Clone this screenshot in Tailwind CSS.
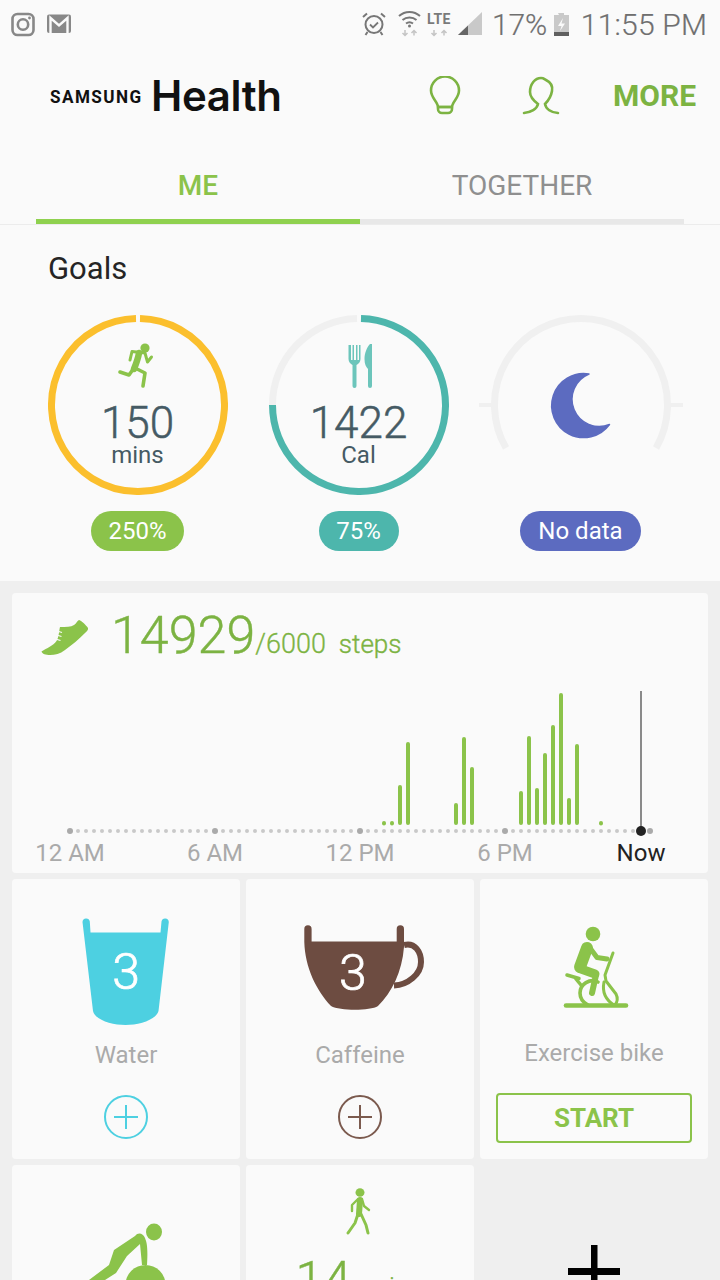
<!DOCTYPE html>
<html lang="en">
<head>
<meta charset="UTF-8">
<meta name="viewport" content="width=device-width, initial-scale=1.0">
<title>Samsung Health</title>
<script src="https://cdn.jsdelivr.net/npm/@tailwindcss/browser@4"></script>
</head>
<body class="bg-[#efefef] font-[Roboto,sans-serif]">
<div class="w-[720px] h-[1280px] overflow-hidden flex flex-col">

  <!-- top area -->
  <div class="bg-[#fafafa] h-[581px] shrink-0">
    <!-- status bar -->
    <div class="h-[48px] flex items-center text-[30px] text-[#7a7a7a] relative">
      <svg class="ml-[10px]" width="64" height="28" viewBox="10 10 64 28" fill="none">
        <rect x="12.5" y="14" width="21" height="21" rx="5" stroke="#888" stroke-width="2.6"/>
        <circle cx="23" cy="24.5" r="5.2" stroke="#888" stroke-width="2.6"/>
        <circle cx="29.5" cy="18" r="1.4" fill="#888"/>
        <path d="M49 14.5H69a2 2 0 0 1 2 2V31a2 2 0 0 1-2 2H49a2 2 0 0 1-2-2V16.500a2 2 0 0 1 2-2Z" fill="#888"/>
        <path d="M50.500 33V18L59 25.500 67.500 18V33" stroke="#fafafa" stroke-width="2.4"/>
      </svg>
      <svg class="ml-[286px]" width="124" height="28" viewBox="360 10 124 28" fill="none">
        <circle cx="374" cy="24.500" r="8.500" stroke="#777" stroke-width="2"/>
        <path d="M370 24.500l3 3 5-5" stroke="#777" stroke-width="1.800"/>
        <path d="M363 17l4-3.500M385 17l-4-3.500M367.500 32l-2 3M380.500 32l2 3" stroke="#777" stroke-width="2"/>
        <path d="M399 16c6-5.500 15-5.500 21 0" stroke="#777" stroke-width="2"/>
        <path d="M402.500 20c4-3.500 10-3.500 14 0" stroke="#777" stroke-width="2"/>
        <path d="M406 23.500c2-1.500 5-1.500 7 0" stroke="#777" stroke-width="2"/>
        <circle cx="409.500" cy="26" r="1.500" fill="#777"/>
        <path d="M405 30v5M402.500 33l2.500 2.500 2.500-2.500M414 35.500v-5M411.500 33l2.500-2.500 2.500 2.500" stroke="#c4c4c4" stroke-width="1.500"/>
        <path d="M434 30v5M431.500 33l2.500 2.500 2.500-2.500M444 35.500v-5M441.500 33l2.500-2.500 2.500 2.500" stroke="#c4c4c4" stroke-width="1.500"/>
        <path d="M458 35 482 12V35Z" fill="#c9c9c9"/>
        <path d="M458 35l10-9.500V35Z" fill="#666"/>
      </svg>
      <span class="absolute left-[427px] top-[11px] text-[14px] leading-[16px] font-bold tracking-[0.4px]">LTE</span>
      <span class="ml-[8px] font-light tracking-[-0.2px] text-[#6f6f6f] [-webkit-text-stroke:0.2px_#6f6f6f]">17%</span>
      <svg class="ml-[6px]" width="18" height="26" viewBox="553 11 18 26">
        <path d="M558 13h6v2h5v21h-15v-21h5Z" fill="#c9c9c9"/>
        <path d="M554 32h15v4h-15Z" fill="#5f5f5f"/>
        <path d="M563 18l-5 8h3.500l-1.500 5 5-7.500h-3.500Z" fill="#fafafa"/>
      </svg>
      <span class="ml-[10px] font-light whitespace-nowrap text-[#6f6f6f] tracking-[0.2px] [-webkit-text-stroke:0.2px_#6f6f6f]">11:55 PM</span>
    </div>

    <!-- header -->
    <div class="h-[96px] flex items-center">
      <span class="ml-[50px] w-[97px] text-[19px] font-bold text-[#111] tracking-[1.6px] scale-x-90 origin-left leading-none mt-[1px]">SAMSUNG</span>
      <span class="ml-[4px] w-[132px] text-[42px] font-[Inter,sans-serif] font-semibold text-[#111] tracking-[-0.4px] leading-none whitespace-nowrap">Health</span>
      <svg class="ml-[146px]" width="32" height="40" viewBox="429 76 32 40" fill="none" stroke="#7cb342" stroke-width="2.600" stroke-linejoin="round">
        <path d="M438 107c0-5-7-9-7-16.500a14 14 0 0 1 28 0c0 7.500-7 11.500-7 16.500Z"/>
        <path d="M438 107h14v2a4 4 0 0 1-4 4h-6a4 4 0 0 1-4-4Z"/>
      </svg>
      <svg class="ml-[61px]" width="38" height="40" viewBox="522 76 38 40" fill="none" stroke="#7cb342" stroke-width="2.600" stroke-linecap="round">
        <path d="M524 113c7-.5 13-4 14-9-4-3-8-7-8-12 0-8 5-14 11-14 3 0 3 1 5 2 4 2 7 6 6 11-1 6-3 9-7 13 1 5 6 8.500 13 9"/>
      </svg>
      <span class="ml-[53px] text-[30px] font-bold text-[#7cb342] leading-none">MORE</span>
    </div>

    <!-- tabs -->
    <div class="h-[81px] border-b border-[#ececec]">
      <div class="mx-[36px] grid grid-cols-2 h-[80px]">
        <div class="border-b-[5px] border-[#8fd14f] flex items-center justify-center pt-[9px] text-[28px] font-medium text-[#8bc34a]">ME</div>
        <div class="border-b-[5px] border-[#e8e8e8] flex items-center justify-center pt-[9px] text-[28px] text-[#8f8f8f]">TOGETHER</div>
      </div>
    </div>

    <!-- goals -->
    <h2 class="ml-[48px] mt-[26px] text-[31px] leading-[36px] text-[#252525]">Goals</h2>
    <div class="flex pl-[27px] mt-[28px]">

      <div class="w-[221px] flex flex-col items-center">
        <div class="relative w-[180px] h-[180px]">
          <svg class="absolute inset-0" width="180" height="180" viewBox="0 0 180 180" fill="none">
            <path d="M92 3.530A86.500 86.500 0 1 1 88 3.530" stroke="#fbbf2d" stroke-width="7"/>
            <circle cx="97" cy="33" r="4.600" fill="#8bc34a"/>
            <path d="M82 45l2-8.500 13 1.500 2.500 9 4-5" stroke="#8bc34a" stroke-width="3" stroke-linecap="round" stroke-linejoin="round"/>
            <path d="M91 38c-1 6-3 11-5 16" stroke="#8bc34a" stroke-width="6.500" stroke-linecap="round"/>
            <path d="M86 53 81 60 72 57" stroke="#8bc34a" stroke-width="3.600" stroke-linecap="round" stroke-linejoin="round"/>
            <path d="M87 53 97 58 95 71" stroke="#8bc34a" stroke-width="3.600" stroke-linecap="round" stroke-linejoin="round"/>
          </svg>
          <div class="absolute inset-x-0 top-[88px] text-center text-[#455a64]">
            <div class="text-[44px] leading-[40px] font-light [-webkit-text-stroke:0.5px_#455a64]">150</div>
            <div class="text-[24px] leading-[24px]">mins</div>
          </div>
        </div>
        <span class="mt-[16px] h-[40px] w-[93px] rounded-full bg-[#8bc34a] text-white text-[24px] flex items-center justify-center">250%</span>
      </div>

      <div class="w-[221px] flex flex-col items-center">
        <div class="relative w-[180px] h-[180px]">
          <svg class="absolute inset-0" width="180" height="180" viewBox="0 0 180 180" fill="none">
            <path d="M3.500 90A86.500 86.500 0 0 1 88 3.530" stroke="#f0f0f0" stroke-width="7"/>
            <path d="M92 3.530A86.500 86.500 0 1 1 3.500 90" stroke="#4db6ac" stroke-width="7"/>
            <path d="M79.500 30v14c0 3 2 5 4 6v21a2 2 0 0 0 4 0V50c2-1 4-3 4-6V30h-1.500v15h-1.500V30h-1.500v15h-2V30H83.500v15H82V30Z" fill="#6cc5bb"/>
            <path d="M101 29c-3 3-5.500 9-5.500 15 0 5 1.500 8 3.500 10v17a2 2 0 0 0 4 0V29Z" fill="#6cc5bb"/>
          </svg>
          <div class="absolute inset-x-0 top-[88px] text-center text-[#455a64]">
            <div class="text-[44px] leading-[40px] font-light [-webkit-text-stroke:0.5px_#455a64]">1422</div>
            <div class="text-[24px] leading-[24px]">Cal</div>
          </div>
        </div>
        <span class="mt-[16px] h-[40px] w-[80px] rounded-full bg-[#4db6ac] text-white text-[24px] flex items-center justify-center">75%</span>
      </div>

      <div class="w-[221px] ml-[1px] flex flex-col items-center">
        <svg class="overflow-visible" width="210" height="180" viewBox="476 315 210 180" fill="none">
          <path d="M506 448A86.500 86.500 0 1 1 656 448" stroke="#f0f0f0" stroke-width="7"/>
          <path d="M479 405h13M670 405h13" stroke="#f0f0f0" stroke-width="4"/>
          <path d="M589 374A32 32 0 1 0 609.500 424.500 27 27 0 0 1 589 374Z" fill="#5c6bc0" stroke="#5c6bc0" stroke-width="1.500" stroke-linejoin="round"/>
        </svg>
        <span class="mt-[16px] h-[40px] w-[121px] rounded-full bg-[#5c6bc0] text-white text-[24px] flex items-center justify-center">No data</span>
      </div>
    </div>
  </div>

  <!-- steps card -->
  <div class="mx-[12px] mt-[12px] h-[280px] shrink-0 rounded bg-[#fafafa] relative">
    <div class="flex items-baseline h-[72px] text-[#7cb342] pt-[8px]">
      <svg class="self-start mt-[18px] ml-[28px]" width="50" height="38" viewBox="40 620 50 38">
        <path d="M41.500 652.500C47 649 53 647 56.500 642 59 638 59 632 60 628 66 628 71 628 74 626 76 625 77 622 79 621 82 622 86 626 88 629 88.500 631 87 632 85 634 79 640 72 646 65 651 60 655 55 656 50 656 46 656 42 655 41.500 652.500Z" fill="#8bc34a"/>
        <path d="M57 632l5 1.500M56.500 636l5 1.500M55.500 640l5 1.500" stroke="#fafafa" stroke-width="1.300"/>
      </svg>
      <span class="ml-[21px] text-[52px] font-light leading-[70px] [-webkit-text-stroke:0.4px_#7cb342]">14929</span>
      <span class="text-[27px] font-light [-webkit-text-stroke:0.3px_#7cb342]">/6000</span>
      <span class="ml-[13px] text-[26px] font-light [-webkit-text-stroke:0.4px_#7cb342]">steps</span>
    </div>
    <svg class="block mt-[20px]" width="696" height="152" viewBox="12 685 696 152" fill="none">
      <g stroke="#8bc34a" stroke-width="4" stroke-linecap="round">
        <path d="M384 823v.5M392 823v.5M400 787v36M408 744v79M456 805v18M464 739v84M472 769v54M521 793v30M529 738v85M537 790v33M545 755v68M553 727v96M561 695v128M569 800v23M577 746v77M601 823v.5"/>
      </g>
      <g fill="#c9c9c9">
        <circle cx="78" cy="831" r="2"/><circle cx="86" cy="831" r="2"/><circle cx="94" cy="831" r="2"/><circle cx="102" cy="831" r="2"/><circle cx="110" cy="831" r="2"/><circle cx="118" cy="831" r="2"/><circle cx="126" cy="831" r="2"/><circle cx="134" cy="831" r="2"/><circle cx="142" cy="831" r="2"/><circle cx="150" cy="831" r="2"/><circle cx="158" cy="831" r="2"/><circle cx="166" cy="831" r="2"/><circle cx="174" cy="831" r="2"/><circle cx="182" cy="831" r="2"/><circle cx="190" cy="831" r="2"/><circle cx="198" cy="831" r="2"/><circle cx="206" cy="831" r="2"/>
        <circle cx="223" cy="831" r="2"/><circle cx="231" cy="831" r="2"/><circle cx="239" cy="831" r="2"/><circle cx="247" cy="831" r="2"/><circle cx="255" cy="831" r="2"/><circle cx="263" cy="831" r="2"/><circle cx="271" cy="831" r="2"/><circle cx="279" cy="831" r="2"/><circle cx="287" cy="831" r="2"/><circle cx="295" cy="831" r="2"/><circle cx="303" cy="831" r="2"/><circle cx="311" cy="831" r="2"/><circle cx="319" cy="831" r="2"/><circle cx="327" cy="831" r="2"/><circle cx="335" cy="831" r="2"/><circle cx="343" cy="831" r="2"/><circle cx="351" cy="831" r="2"/>
        <circle cx="368" cy="831" r="2"/><circle cx="376" cy="831" r="2"/><circle cx="384" cy="831" r="2"/><circle cx="392" cy="831" r="2"/><circle cx="400" cy="831" r="2"/><circle cx="408" cy="831" r="2"/><circle cx="416" cy="831" r="2"/><circle cx="424" cy="831" r="2"/><circle cx="432" cy="831" r="2"/><circle cx="440" cy="831" r="2"/><circle cx="448" cy="831" r="2"/><circle cx="456" cy="831" r="2"/><circle cx="464" cy="831" r="2"/><circle cx="472" cy="831" r="2"/><circle cx="480" cy="831" r="2"/><circle cx="488" cy="831" r="2"/><circle cx="496" cy="831" r="2"/>
        <circle cx="513" cy="831" r="2"/><circle cx="521" cy="831" r="2"/><circle cx="529" cy="831" r="2"/><circle cx="537" cy="831" r="2"/><circle cx="545" cy="831" r="2"/><circle cx="553" cy="831" r="2"/><circle cx="561" cy="831" r="2"/><circle cx="569" cy="831" r="2"/><circle cx="577" cy="831" r="2"/><circle cx="585" cy="831" r="2"/><circle cx="593" cy="831" r="2"/><circle cx="601" cy="831" r="2"/><circle cx="609" cy="831" r="2"/><circle cx="617" cy="831" r="2"/><circle cx="625" cy="831" r="2"/><circle cx="633" cy="831" r="2"/>
      </g>
      <g fill="#aaa">
        <circle cx="70" cy="831" r="3"/><circle cx="215" cy="831" r="3"/><circle cx="360" cy="831" r="3"/><circle cx="505" cy="831" r="3"/><circle cx="650" cy="831" r="3"/>
      </g>
      <path d="M641 691v140" stroke="#8a8a8a" stroke-width="2"/>
      <circle cx="641" cy="831" r="5" fill="#222"/>
    </svg>
    <div class="flex text-[24px] leading-[30px] text-[#aaa] mt-[1px]">
      <span class="ml-[8px] w-[100px] text-center">12 AM</span>
      <span class="ml-[45px] w-[100px] text-center">6 AM</span>
      <span class="ml-[45px] w-[100px] text-center">12 PM</span>
      <span class="ml-[45px] w-[100px] text-center">6 PM</span>
      <span class="ml-[36px] w-[100px] text-center text-[#222]">Now</span>
    </div>
  </div>

  <!-- tiles -->
  <div class="mx-[12px] mt-[6px] grid grid-cols-3 gap-[6px] grid-rows-[280px_280px]">
    <div class="rounded bg-[#fafafa] flex flex-col items-center pt-[36px]">
      <div class="relative h-[112px] w-[94px] flex items-center justify-center">
        <svg class="absolute inset-0" width="94" height="112" viewBox="80 915 94 112">
          <path d="M83.500 922a3.700 3.700 0 0 1 7.300-.5L91.500 932.500H161.500L162.500 921.500a3.700 3.700 0 0 1 7.300.5L159.500 1011C157 1020 140 1025 126.500 1025 113 1025 96 1020 94 1011Z" fill="#4dd0e1"/>
        </svg>
        <span class="relative text-white text-[50px] font-light leading-none mt-[2px] [-webkit-text-stroke:0.7px_white]">3</span>
      </div>
      <span class="mt-[13px] text-[24px] leading-[30px] text-[#aaa]">Water</span>
      <svg class="mt-[24px]" width="46" height="46" viewBox="0 0 46 46" fill="none" stroke="#4dd0e1" stroke-width="2">
        <circle cx="23" cy="23" r="21"/><path d="M11 23h24M23 11v24"/>
      </svg>
    </div>
    <div class="rounded bg-[#fafafa] flex flex-col items-center pt-[44px]">
      <div class="relative h-[104px] w-[126px] ml-[6px]">
        <svg class="absolute inset-0" width="126" height="106" viewBox="300 921 126 106" fill="none">
          <path d="M404 943c11-3 17 7 17 17 0 12-13 23-27 23.500" stroke="#6d4c41" stroke-width="6"/>
          <path d="M304.300 927a3.600 3.600 0 0 1 7.300 0V939.500H396.700V927a3.600 3.600 0 0 1 7.300 0V945C402 970 392 990 378 1004 370 1009 340 1009 331 1004 316 988 305 965 304.300 940Z" fill="#6d4c41"/>
        </svg>
        <span class="absolute left-[39px] top-[25px] w-[24px] text-center text-white text-[50px] font-light leading-[50px] [-webkit-text-stroke:0.7px_white]">3</span>
      </div>
      <span class="mt-[13px] text-[24px] leading-[30px] text-[#aaa]">Caffeine</span>
      <svg class="mt-[24px]" width="46" height="46" viewBox="0 0 46 46" fill="none" stroke="#7b5a4e" stroke-width="2">
        <circle cx="23" cy="23" r="21"/><path d="M11 23h24M23 11v24"/>
      </svg>
    </div>
    <div class="rounded bg-[#fafafa] flex flex-col items-center pt-[46px] px-[16px]">
      <svg class="ml-[3px]" width="70" height="86" viewBox="560 926 70 86" fill="none" stroke="#8bc34a" stroke-linecap="round" stroke-linejoin="round">
        <circle cx="592" cy="935" r="7.300" fill="#8bc34a" stroke="none"/>
        <path d="M586 949l-7 19" stroke-width="12"/>
        <path d="M589 949l7 9.500 10 1.500" stroke-width="5"/>
        <path d="M580 970l14 5" stroke-width="9"/>
        <path d="M595 976l-4 18" stroke-width="6"/>
        <path d="M566 976l12 3.500" stroke-width="3.500"/>
        <path d="M575 980l5 6" stroke-width="3.500"/>
        <path d="M612 954l-8 22 1 6 10 13c2 4 2 7-1 11" stroke-width="3"/>
        <path d="M597 983c-8-4-18 2-18 11 0 6 4 10 8 12" stroke-width="3.600"/>
        <path d="M603 983c-2 10 2 18 10 23" stroke-width="3"/>
        <path d="M565 1006.500h60" stroke-width="4.600"/>
      </svg>
      <span class="mt-[27px] text-[24px] leading-[30px] text-[#aaa]">Exercise bike</span>
      <button class="mt-[25px] w-full h-[50px] rounded border-2 border-[#8bc34a] text-[26px] font-bold text-[#8bc34a] leading-none">START</button>
    </div>

    <div class="rounded bg-[#fafafa] flex justify-center pt-[58px]">
      <svg width="100" height="70" viewBox="75 1223 100 70">
        <ellipse cx="153" cy="1232" rx="8" ry="8.500" fill="#8bc34a"/>
        <circle cx="144.500" cy="1285" r="20" fill="#8bc34a"/>
        <path d="M134 1236c3-4 8-3 10 2 2 5 3 10 2 27h-5l-2-21-13 12-11 17-11 7-14 4-2-4 20-15 5-15Z" fill="#8bc34a"/>
      </svg>
    </div>
    <div class="rounded bg-[#fafafa] flex flex-col items-center pt-[22px]">
      <svg width="30" height="48" viewBox="346 1187 30 48" fill="none" stroke="#8bc34a" stroke-linecap="round" stroke-linejoin="round">
        <ellipse cx="361" cy="1192.500" rx="4.500" ry="4.300" fill="#8bc34a" stroke="none"/>
        <path d="M361 1200l-1 14" stroke-width="6"/>
        <path d="M359 1199l-6 6v6M363 1199l2 7 5 4" stroke-width="2.400"/>
        <path d="M359 1214l-3 9-7 10" stroke-width="3"/>
        <path d="M362 1214l5 11 2 8" stroke-width="3"/>
      </svg>
      <div class="mt-[15px] text-[#7cb342] whitespace-nowrap leading-[60px]">
        <span class="text-[50px] font-light [-webkit-text-stroke:0.4px_#7cb342]">14</span><span class="ml-[13px] text-[28px] font-light">mins</span>
      </div>
    </div>
    <div class="flex justify-center pt-[80px]">
      <svg width="52" height="70" viewBox="568 1245 52 70">
        <path d="M591 1245h6.500v23H620v7H597.500v40H591v-40H568v-7h23Z" fill="#000"/>
      </svg>
    </div>
  </div>
</div>
</body>
</html>
